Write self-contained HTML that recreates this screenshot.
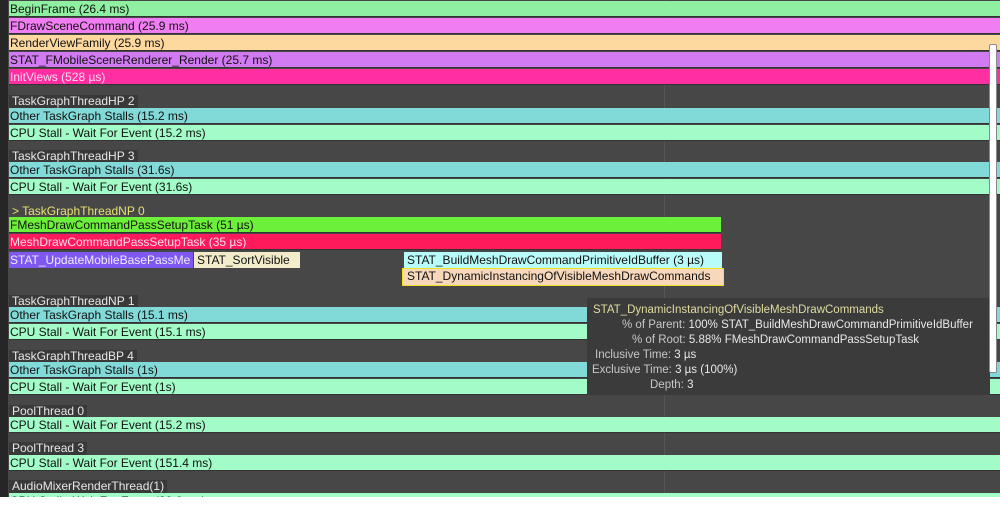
<!DOCTYPE html>
<html><head><meta charset="utf-8"><style>
*{margin:0;padding:0;box-sizing:border-box}
body{width:1000px;height:512px;background:#fff;overflow:hidden;font-family:"Liberation Sans",sans-serif;font-size:12px}
#v{position:absolute;left:0;top:0;width:1000px;height:497px;background:#474747;overflow:hidden}
#ls{position:absolute;left:0;top:0;width:8px;height:497px;background:#262626}
.b{position:absolute;left:9px;right:0;height:16px;line-height:16px;padding-left:1px;color:#111;white-space:nowrap;border-bottom:1px solid #333}
.l{position:absolute;left:9px;height:13px;line-height:13px;padding:0 3px;background:#393939;color:#e8e8e8;white-space:nowrap}
.vl{position:absolute;top:0;width:1px;height:497px;background:#555}
#tt{position:absolute;left:587px;top:298px;width:403px;height:97px;background:#3b3b3b;color:#c8c8c8;font-size:11.5px}
#tt div{position:absolute;white-space:nowrap;line-height:15px}
</style></head><body>
<div id="v">
<div class="vl" style="left:664px"></div>
<div id="ls"></div>
<div class="b" style="top:1px;background:#8ef0a0">BeginFrame (26.4 ms)</div>
<div class="b" style="top:18px;background:#f07ef2">FDrawSceneCommand (25.9 ms)</div>
<div class="b" style="top:35px;background:#fdd9a0">RenderViewFamily (25.9 ms)</div>
<div class="b" style="top:52px;background:#d27af2">STAT_FMobileSceneRenderer_Render (25.7 ms)</div>
<div class="b" style="top:69px;background:#ff2fa2;color:#fde">InitViews (528 µs)</div>

<div class="l" style="top:95px">TaskGraphThreadHP 2</div>
<div class="b" style="top:108px;background:#82dad8">Other TaskGraph Stalls (15.2 ms)</div>
<div class="b" style="top:125px;background:#a2fcc8">CPU Stall - Wait For Event (15.2 ms)</div>

<div class="l" style="top:150px">TaskGraphThreadHP 3</div>
<div class="b" style="top:162px;background:#82dad8">Other TaskGraph Stalls (31.6s)</div>
<div class="b" style="top:179px;background:#a2fcc8">CPU Stall - Wait For Event (31.6s)</div>

<div class="l" style="top:205px;color:#e8e070;background:none">&gt; TaskGraphThreadNP 0</div>
<div class="b" style="top:217px;right:279px;background:#6cf03a">FMeshDrawCommandPassSetupTask (51 µs)</div>
<div class="b" style="top:234px;right:279px;background:#ff1a5c;color:#fde">MeshDrawCommandPassSetupTask (35 µs)</div>
<div class="b" style="top:252px;right:807px;background:#7f58f0;color:#eef;border:none">STAT_UpdateMobileBasePassMe</div>
<div class="b" style="top:252px;left:194px;right:700px;background:#f2ecca;border:none;padding-left:3px">STAT_SortVisible</div>
<div class="b" style="top:252px;left:404px;right:278px;background:#b8fcfa;border:none;padding-left:3px">STAT_BuildMeshDrawCommandPrimitiveIdBuffer (3 µs)</div>
<div class="b" style="top:268px;left:402px;right:276px;height:18px;line-height:15px;background:#f8d8ba;border:1.5px solid #f0e020;padding-left:4px">STAT_DynamicInstancingOfVisibleMeshDrawCommands</div>

<div class="l" style="top:295px">TaskGraphThreadNP 1</div>
<div class="b" style="top:307px;background:#82dad8">Other TaskGraph Stalls (15.1 ms)</div>
<div class="b" style="top:324px;background:#a2fcc8">CPU Stall - Wait For Event (15.1 ms)</div>

<div class="l" style="top:350px">TaskGraphThreadBP 4</div>
<div class="b" style="top:362px;background:#82dad8">Other TaskGraph Stalls (1s)</div>
<div class="b" style="top:379px;background:#a2fcc8">CPU Stall - Wait For Event (1s)</div>

<div class="l" style="top:405px">PoolThread 0</div>
<div class="b" style="top:417px;background:#a2fcc8">CPU Stall - Wait For Event (15.2 ms)</div>

<div class="l" style="top:442px">PoolThread 3</div>
<div class="b" style="top:455px;background:#a2fcc8">CPU Stall - Wait For Event (151.4 ms)</div>

<div class="l" style="top:480px">AudioMixerRenderThread(1)</div>
<div class="b" style="top:493px;background:#a2fcc8">CPU Stall - Wait For Event (20.6 ms)</div>

<div id="tt">
<div style="left:6px;top:5px;color:#e0dca0">STAT_DynamicInstancingOfVisibleMeshDrawCommands</div>
<div style="left:35px;top:20px">% of Parent: <span style="color:#e8e8e8">100% STAT_BuildMeshDrawCommandPrimitiveIdBuffer</span></div>
<div style="left:45px;top:35px">% of Root: <span style="color:#e8e8e8">5.88% FMeshDrawCommandPassSetupTask</span></div>
<div style="left:8px;top:50px">Inclusive Time: <span style="color:#e8e8e8">3 µs</span></div>
<div style="left:5px;top:65px">Exclusive Time: <span style="color:#e8e8e8">3 µs (100%)</span></div>
<div style="left:63px;top:80px">Depth: <span style="color:#e8e8e8">3</span></div>
</div>
<div style="position:absolute;left:989px;top:44px;width:8px;height:329px;background:#fff;border:1px solid #888;border-radius:2px"></div>
</div>
</body></html>
